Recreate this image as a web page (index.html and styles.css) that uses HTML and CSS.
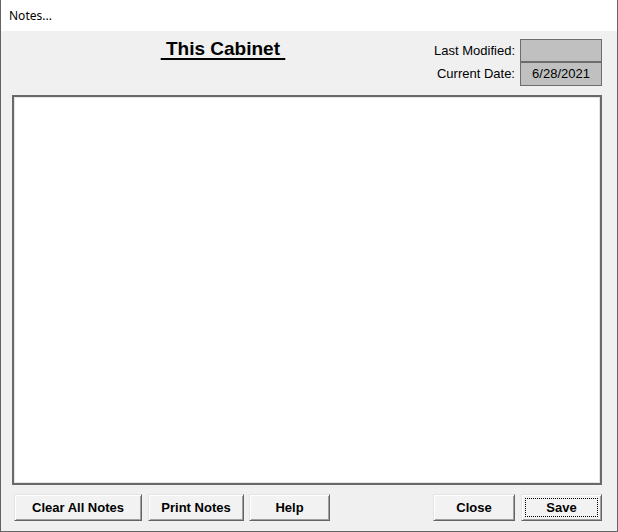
FILE: index.html
```html
<!DOCTYPE html>
<html>
<head>
<meta charset="utf-8">
<link rel="stylesheet" href="styles.css">
</head>
<body>
<div class="window">
  <div class="titlebar">Notes...</div>
  <div class="content">
    <div class="header">
      <div class="heading-wrap"><span class="heading"> This Cabinet </span></div>
      <div class="dates">
        <span class="label">Last Modified:</span><span class="field"></span>
        <span class="label">Current Date:</span><span class="field">6/28/2021</span>
      </div>
    </div>
    <div class="notes"></div>
    <div class="buttons">
      <div class="group">
        <button class="btn btn-clear">Clear All Notes</button>
        <button class="btn btn-print">Print Notes</button>
        <button class="btn btn-help">Help</button>
      </div>
      <div class="group">
        <button class="btn btn-close">Close</button>
        <button class="btn btn-save focused">Save</button>
      </div>
    </div>
  </div>
</div>
</body>
</html>
```

FILE: styles.css
```css
html, body {
  margin: 0;
  padding: 0;
  background: #f0f0f0;
}
.window {
  width: 618px;
  height: 532px;
  box-sizing: border-box;
  border: 1px solid #646464;
  border-top: none;
  background: #f0f0f0;
  display: flex;
  flex-direction: column;
  font-family: "Liberation Sans", Arial, sans-serif;
  color: #000;
}
.titlebar {
  height: 31px;
  background: #fff;
  font-family: "Noto Sans", "Segoe UI", sans-serif;
  font-size: 12px;
  line-height: 31px;
  padding-left: 8px;
}
.content {
  flex: 1;
  display: flex;
  flex-direction: column;
  padding: 8px 15px 10px 11px;
}
.header {
  display: flex;
  height: 47px;
}
.heading-wrap {
  flex: 1;
  text-align: center;
  padding-top: 0px;
  padding-left: 4px;
}
.heading {
  white-space: pre;
  font-weight: bold;
  font-size: 19px;
  line-height: 20px;
  text-decoration: underline;
  text-decoration-thickness: 2px;
  text-underline-offset: 3px;
}
.dates {
  width: 172px;
  display: grid;
  grid-template-columns: 1fr 82px;
  grid-template-rows: 23px 24px;
  column-gap: 5px;
}
.label {
  text-align: right;
  font-size: 13px;
  line-height: 24px;
}
.field {
  box-sizing: border-box;
  border: 1px solid #6d6d6d;
  background: #c0c0c0;
  font-size: 13px;
  text-align: center;
  line-height: 21px;
}
.notes {
  margin-top: 9px;
  height: 390px;
  box-sizing: border-box;
  border: 2px solid #696969;
  background: #fff;
  box-shadow: inset 0 0 0 1px #e3e3e3;
}
.buttons {
  margin-top: 9px;
  display: flex;
  justify-content: space-between;
}
.group {
  display: flex;
}
.btn {
  height: 27px;
  box-sizing: border-box;
  margin: 0;
  padding: 0;
  background: #f2f2f2;
  border: 1px solid;
  border-color: #e3e3e3 #646464 #646464 #e3e3e3;
  box-shadow: inset 1px 1px 0 #fff, inset -1px -1px 0 #a0a0a0;
  font-family: "Liberation Sans", Arial, sans-serif;
  font-weight: bold;
  font-size: 13px;
  color: #000;
  position: relative;
}
.btn-clear { width: 128px; margin-left: 2px; }
.btn-print { width: 96px; margin-left: 6px; }
.btn-help { width: 81px; margin-left: 5px; }
.btn-close { width: 82px; }
.btn-save { width: 81px; margin-left: 6px; }
.focused::after {
  content: "";
  position: absolute;
  left: 3px;
  top: 3px;
  right: 3px;
  bottom: 3px;
  border: 1px dotted #000;
}
```
